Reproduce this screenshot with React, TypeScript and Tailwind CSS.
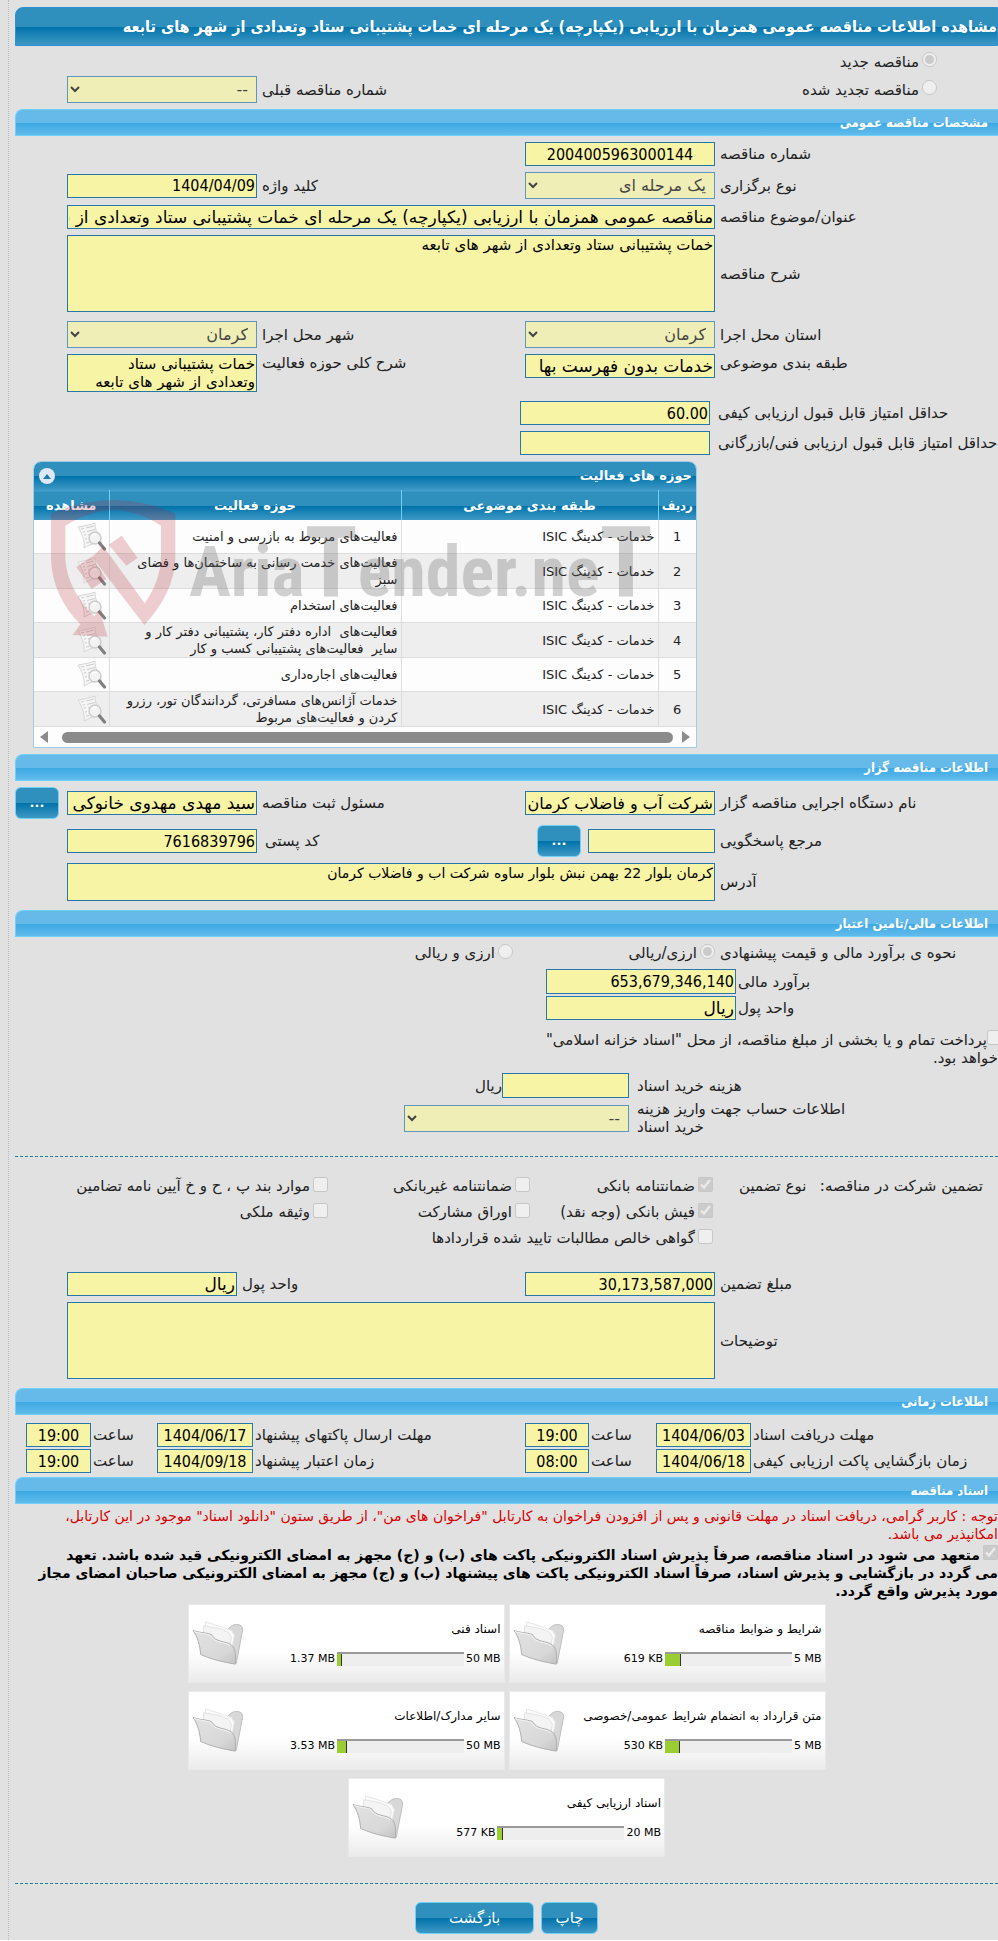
import type { ComponentProps, ReactNode } from "react";
import { twMerge } from "tailwind-merge";

const activities = [
  "فعالیت‌های مربوط به بازرسی و امنیت",
  "فعالیت‌های خدمت رسانی به ساختمان‌ها و فضای سبز",
  "فعالیت‌های استخدام",
  "فعالیت‌های  اداره دفتر کار، پشتیبانی دفتر کار و سایر  فعالیت‌های پشتیبانی کسب و کار",
  "فعالیت‌های اجاره‌داری",
  "خدمات آژانس‌های مسافرتی، گردانندگان تور، رزرو کردن و فعالیت‌های مربوط",
];

const documents = [
  { title: "شرایط و ضوابط مناقصه", used: "619 KB", limit: "5 MB", percent: 13 },
  { title: "اسناد فنی", used: "1.37 MB", limit: "50 MB", percent: 4 },
  { title: "متن قرارداد به انضمام شرایط عمومی/خصوصی", used: "530 KB", limit: "5 MB", percent: 12 },
  { title: "سایر مدارک/اطلاعات", used: "3.53 MB", limit: "50 MB", percent: 8 },
  { title: "اسناد ارزیابی کیفی", used: "577 KB", limit: "20 MB", percent: 4 },
];

const tender = "مناقصه عمومی همزمان با ارزیابی (یکپارچه) یک مرحله ای خمات پشتیبانی ستاد وتعدادی از شهر های تابعه";

// Shared class strings
const field = "block w-full border border-[#2678ab] bg-[#f7f4a6] text-black";
const area = "resize-none overflow-hidden px-px text-[15px] leading-[18px]";
const condensed = "font-['DejaVu_Sans_Condensed','DejaVu_Sans',sans-serif]";
const farsi = "font-['DejaVu_Sans',sans-serif] text-[17px]";
const darkBar = "bg-[linear-gradient(to_bottom,#2f90be_0%,#2f90be_50%,#0073ab_51%,#3f98c4_100%)]";
const twoCols = "grid grid-cols-[minmax(0,1fr)_190px_268px_190px_52px] items-center";
const timeCols = "grid grid-cols-[minmax(0,1fr)_95px_67px_64px_272px_96px_66px_65px_11px] items-center";

function Label({ className, ...props }: ComponentProps<"label">) {
  return <label className={twMerge("block pl-[5px] text-left", className)} {...props} />;
}

function TextField({ className, ...props }: ComponentProps<"input">) {
  return <input type="text" readOnly className={twMerge(field, condensed, "h-6 px-px text-[16px]", className)} {...props} />;
}

function SelectField({ id, value, className }: { id: string; value: string; className?: string }) {
  return (
    <select id={id} disabled className={twMerge(field, "h-[27px] px-1 text-[16px] opacity-70", className)}>
      <option>{value}</option>
    </select>
  );
}

function Choice({ type, name, checked, children }: { type: "radio" | "checkbox"; name?: string; checked?: boolean; children: ReactNode }) {
  return (
    <label className="flex items-center gap-[3px] whitespace-nowrap">
      <input type={type} name={name} defaultChecked={checked} disabled className="mb-1 size-[15px] shrink-0" />
      {children}
    </label>
  );
}

function Section({ title, className, children }: { title: string; className?: string; children: ReactNode }) {
  return (
    <section>
      <h2 className={twMerge("flex h-[27px] items-center rounded-tl-lg border-y border-l border-[#6fd0fa] bg-[linear-gradient(to_bottom,#66baea_0%,#66baea_50%,#3ba8e3_51%,#62bbec_100%)] pr-2.5 text-[13px] font-bold text-white", condensed)}>
        {title}
      </h2>
      <div className={twMerge("flex flex-col py-1.5", className)}>{children}</div>
    </section>
  );
}

function ActionButton({ className, ...props }: ComponentProps<"button">) {
  return (
    <button
      type="button"
      className={twMerge("h-8 rounded-md border border-[#6fd0fa] text-[15px] text-white", darkBar, className)}
      {...props}
    />
  );
}

function DocumentSearchIcon() {
  return (
    <svg width="30" height="29" viewBox="0 0 30 29" fill="none">
      <path d="M1 5c6-1 12-2 17-4 0 6 2 12 7 20-6-1-11 1-18 5C8 18 5 12 1 5Z" fill="#f6f6f6" stroke="#d6d6d6" />
      <path d="M4 7l3-.6M9 6l8-2M6 10l2-.4M10 9.500l8-2M7 13l2-.4M11 13l5-1.500M8 17l2-.4M9 21l3-.6" stroke="#cccccc" />
      <circle cx="18" cy="16" r="6" fill="#f2f2f2" fillOpacity=".85" stroke="#cdcdcd" strokeWidth="1.500" />
      <path d="M15 14c1-2 4-2 5-1" stroke="#fff" strokeWidth="1.500" />
      <path d="M22.500 21l5 6" stroke="#808080" strokeWidth="3.200" strokeLinecap="round" />
    </svg>
  );
}

function FolderIcon() {
  return (
    <svg width="52" height="48" viewBox="0 0 54 50" fill="none">
      <defs>
        <linearGradient id="folder-front" x1="0" y1="0" x2="1" y2="1">
          <stop offset="0" stopColor="#e2e2e2" />
          <stop offset=".7" stopColor="#d8d8d8" />
          <stop offset="1" stopColor="#c2c2c2" />
        </linearGradient>
      </defs>
      <path d="M12 12 37 10c4-5 9-7 14-4 2 2 2 5 1 8l-6 31-8-2Z" fill="#d8d8d8" stroke="#bcbcbc" />
      <path d="M14 2 30 7l11 4 3 5-5 27-26-15Z" fill="#fbfbfb" stroke="#e6e6e6" />
      <path d="M12 6 29 9l9 4 3 5-5 25-24-13Z" fill="#f4f4f4" stroke="#e2e2e2" />
      <path d="M1 11c5 2 13 2 19 4 5 9 14 6 21 11 4 4 5 9 4 20-12-2-25-5-36-10C8 26 6 18 1 11Z" fill="url(#folder-front)" stroke="#acacac" />
      <path d="M2 12c5 2 12 2 17 4 5 9 14 6 21 11" stroke="#f4f4f4" />
    </svg>
  );
}

function Watermark() {
  return (
    <div aria-hidden="true" dir="ltr" className="pointer-events-none absolute inset-0 overflow-hidden">
      <svg className="absolute top-[37px] left-[17px]" width="125" height="138" viewBox="60 118 375 414" fill="#b91c2c" fillOpacity=".21">
        <path d="M60 162Q250 80 433 162V300Q428 400 340 496L183 292 217 260 341 431Q388 365 390 290V198Q250 105 103 198V300Q110 390 190 470L205 450 230 531 124 526 148 494Q65 410 60 300Z" />
        <path d="M233 255 272 228 320 295 286 318ZM136 322 182 291 226 358 182 388Z" />
      </svg>
      <span className="absolute top-[51px] left-[155px] font-['Noto_Sans_ExtraCondensed','Roboto_Condensed','Open_Sans_Condensed','Roboto',sans-serif] text-[70px] leading-[100px] font-bold whitespace-nowrap text-[#6b6b6b]/30">
        Aria<span className="text-[98px]">T</span>ender.ne<span className="text-[98px]">T</span>
      </span>
    </div>
  );
}

function ActivityTable() {
  return (
    <div className="relative mr-[301px] ml-[18px] overflow-hidden rounded-t-lg border border-[#a3cbe6] bg-[#fdfdfd]">
      <div className={twMerge("flex h-7 items-center justify-between pr-1 pl-[5px]", darkBar)}>
        <h3 className="text-[13px] font-bold text-white">حوزه های فعالیت</h3>
        <button type="button" aria-label="بستن" className="flex size-4 items-center justify-center rounded-full bg-[#dfe8f8]">
          <svg width="8" height="5" viewBox="0 0 8 5">
            <path d="M0 5 4 0l4 5Z" fill="#1b7cae" />
          </svg>
        </button>
      </div>
      <table className="w-full table-fixed border-collapse text-[13px] leading-[17px] text-[#222]">
        <thead>
          <tr className={twMerge("h-[29px] border-t border-[#3f9fd0] text-white", darkBar)}>
            <th className={twMerge("w-[38px] border-l border-[#6fd0fa]", condensed)}>ردیف</th>
            <th className="w-[257px] border-l border-[#6fd0fa]">طبقه بندی موضوعی</th>
            <th className="border-l border-[#6fd0fa]">حوزه فعالیت</th>
            <th className="w-[75px]">مشاهده</th>
          </tr>
        </thead>
        <tbody>
          {activities.map((activity, i) => (
            <tr key={activity} className="h-[34px] border-b border-[#ddd] odd:bg-[#fdfdfd] even:bg-[#eeeeee]">
              <td className="border-l border-[#ddd] text-center">{i + 1}</td>
              <td className="border-l border-[#ddd] px-[3px]">خدمات - کدینگ ISIC</td>
              <td className="border-l border-[#ddd] pr-[3px] pl-2 whitespace-pre-wrap">{activity}</td>
              <td className="pr-0.5">
                <DocumentSearchIcon />
              </td>
            </tr>
          ))}
        </tbody>
      </table>
      <div className="flex h-5 items-center gap-2 px-1.5">
        <svg width="8" height="12" viewBox="0 0 8 12">
          <path d="M0 0 8 6 0 12Z" fill="#8b8b8b" />
        </svg>
        <div className="mr-px ml-1.5 h-[11px] flex-1 rounded-full bg-[#8b8b8b]" />
        <svg width="8" height="12" viewBox="0 0 8 12">
          <path d="M8 0 0 6l8 6Z" fill="#8b8b8b" />
        </svg>
      </div>
      <Watermark />
    </div>
  );
}

export default function App() {
  return (
    <div dir="rtl" lang="fa" className="bg-[#e1e1e1] pl-2 font-['DejaVu_Sans',sans-serif] text-[15px] leading-[18px] text-[#222]">
      <main className="overflow-hidden border-l border-dotted border-[#bbb] pt-[7px] pb-1.5 pl-1.5">
        <h1 className={twMerge("flex h-[39px] items-center rounded-tl-lg border border-[#2d8fd5] text-[16px] font-bold whitespace-nowrap text-white", condensed, darkBar)}>
          مشاهده اطلاعات {tender}
        </h1>

        <div className="flex flex-col gap-1.5 py-1.5">
          <div className="h-[18px] pr-[61px]">
            <Choice type="radio" name="tender-kind" checked>مناقصه جدید</Choice>
          </div>
          <div className={twoCols}>
            <div className="pr-[61px]">
              <Choice type="radio" name="tender-kind">مناقصه تجدید شده</Choice>
            </div>
            <Label htmlFor="previous" className="col-start-3">شماره مناقصه قبلی</Label>
            <SelectField id="previous" value="--" />
          </div>
        </div>

        <Section title="مشخصات مناقصه عمومی" className="gap-1.5">
          <div className={twoCols}>
            <Label htmlFor="number">شماره مناقصه</Label>
            <TextField id="number" defaultValue="2004005963000144" className="text-center" />
          </div>
          <div className={twoCols}>
            <Label htmlFor="method">نوع برگزاری</Label>
            <SelectField id="method" value="یک مرحله ای" />
            <Label htmlFor="keyword">کلید واژه</Label>
            <TextField id="keyword" defaultValue="1404/04/09" />
          </div>
          <div className={twoCols}>
            <Label htmlFor="subject">عنوان/موضوع مناقصه</Label>
            <TextField id="subject" defaultValue={tender} className={twMerge(farsi, "col-span-3")} />
          </div>
          <div className={twoCols}>
            <Label htmlFor="description">شرح مناقصه</Label>
            <textarea id="description" readOnly className={twMerge(field, area, "col-span-3 h-[77px]")} defaultValue="خمات پشتیبانی ستاد وتعدادی از شهر های تابعه" />
          </div>
          <div className={twMerge(twoCols, "mt-[3px]")}>
            <Label htmlFor="province">استان محل اجرا</Label>
            <SelectField id="province" value="کرمان" />
            <Label htmlFor="city">شهر محل اجرا</Label>
            <SelectField id="city" value="کرمان" />
          </div>
          <div className={twMerge(twoCols, "items-start")}>
            <Label htmlFor="category">طبقه بندی موضوعی</Label>
            <TextField id="category" defaultValue="خدمات بدون فهرست بها" className={farsi} />
            <Label htmlFor="scope">شرح کلی حوزه فعالیت</Label>
            <textarea id="scope" readOnly className={twMerge(field, area, "h-[38px] pl-5")} defaultValue="خمات پشتیبانی ستاد وتعدادی از شهر های تابعه" />
          </div>
          <div className="mt-[3px] flex items-center pl-[505px]">
            <Label htmlFor="quality-score" className="flex-1 pl-2 whitespace-nowrap">حداقل امتیاز قابل قبول ارزیابی کیفی</Label>
            <TextField id="quality-score" defaultValue="60.00" className="w-[190px]" />
          </div>
          <div className="flex items-center pl-[505px]">
            <Label htmlFor="technical-score" className="flex-1 pl-2 whitespace-nowrap">حداقل امتیاز قابل قبول ارزیابی فنی/بازرگانی</Label>
            <TextField id="technical-score" className="w-[190px]" />
          </div>
          <ActivityTable />
        </Section>

        <Section title="اطلاعات مناقصه گزار" className="gap-1.5">
          <div className={twoCols}>
            <Label htmlFor="agency">نام دستگاه اجرایی مناقصه گزار</Label>
            <TextField id="agency" defaultValue="شرکت آب و فاضلاب کرمان" className={twMerge(farsi, "text-[16px]")} />
            <Label htmlFor="registrar">مسئول ثبت مناقصه</Label>
            <TextField id="registrar" defaultValue="سید مهدی مهدوی خانوکی" className={farsi} />
            <ActionButton className="mr-2 text-[13px] font-bold">...</ActionButton>
          </div>
          <div className={twoCols}>
            <Label htmlFor="authority">مرجع پاسخگویی</Label>
            <div className="flex items-center gap-[7px]">
              <TextField id="authority" className="w-[127px]" />
              <ActionButton className="w-11 shrink-0 text-[13px] font-bold">...</ActionButton>
            </div>
            <Label htmlFor="postal-code" className="pl-2">کد پستی</Label>
            <TextField id="postal-code" defaultValue="7616839796" />
          </div>
          <div className={twMerge(twoCols, "mb-[3px]")}>
            <Label htmlFor="address">آدرس</Label>
            <textarea id="address" readOnly className={twMerge(field, area, "col-span-3 h-[38px] text-[14px]")} defaultValue="کرمان بلوار 22 بهمن نبش بلوار ساوه شرکت اب و فاضلاب کرمان" />
          </div>
        </Section>

        <Section title="اطلاعات مالی/تامین اعتبار">
          <div role="radiogroup" aria-labelledby="estimate-kind" className="grid h-5 grid-cols-[minmax(0,1fr)_202px_498px] items-center">
            <span id="estimate-kind" className="pl-[5px] text-left">نحوه ی برآورد مالی و قیمت پیشنهادی</span>
            <Choice type="radio" name="currency" checked>ارزی/ریالی</Choice>
            <Choice type="radio" name="currency">ارزی و ریالی</Choice>
          </div>
          <div className="mt-1.5 grid grid-cols-[minmax(0,1fr)_190px_531px] items-center gap-y-0.5">
            <Label htmlFor="estimate" className="pl-0.5">برآورد مالی</Label>
            <TextField id="estimate" defaultValue="653,679,346,140" className="h-[25px]" />
            <Label htmlFor="currency-unit" className="col-start-1 pl-0.5">واحد پول</Label>
            <TextField id="currency-unit" defaultValue="ریال" className={farsi} />
          </div>
          <label className="mt-2.5 w-[460px]">
            <input type="checkbox" disabled className="-mr-1 size-[15px]" />
            پرداخت تمام و یا بخشی از مبلغ مناقصه، از محل "اسناد خزانه اسلامی" خواهد بود.
          </label>
          <div className="mt-1.5 grid grid-cols-[minmax(0,1fr)_127px_487px] items-center">
            <Label htmlFor="document-cost" className="pl-2">هزینه خرید اسناد</Label>
            <TextField id="document-cost" className="h-[25px]" />
            <span>ریال</span>
          </div>
          <div className="mt-0.5 grid grid-cols-[minmax(0,1fr)_225px_389px] items-center">
            <Label htmlFor="account" className="w-[220px] justify-self-end pl-2">اطلاعات حساب جهت واریز هزینه خرید اسناد</Label>
            <SelectField id="account" value="--" />
          </div>
          <hr className="mt-5 border-dashed border-[#2678ab]" />

          <div className="mt-4 grid grid-cols-[minmax(0,1fr)_183px_202px_313px] items-center">
            <div className="flex h-[26px] items-center justify-between pr-[15px] pl-[26px] whitespace-nowrap">
              <span>تضمین شرکت در مناقصه:</span>
              <span>نوع تضمین</span>
            </div>
            <Choice type="checkbox" checked>ضمانتنامه بانکی</Choice>
            <Choice type="checkbox">ضمانتنامه غیربانکی</Choice>
            <Choice type="checkbox">موارد بند پ ، ح و خ آیین نامه تضامین</Choice>
            <div className="col-start-2 flex h-[26px] items-center">
              <Choice type="checkbox" checked>فیش بانکی (وجه نقد)</Choice>
            </div>
            <Choice type="checkbox">اوراق مشارکت</Choice>
            <Choice type="checkbox">وثیقه ملکی</Choice>
            <div className="col-span-2 col-start-2 flex h-[26px] items-center">
              <Choice type="checkbox">گواهی خالص مطالبات تایید شده قراردادها</Choice>
            </div>
          </div>

          <div className="mt-[21px] mb-[3px] flex flex-col gap-1.5">
            <div className={twoCols}>
              <Label htmlFor="guarantee">مبلغ تضمین</Label>
              <TextField id="guarantee" defaultValue="30,173,587,000" />
              <div className="col-span-2 flex items-center">
                <Label htmlFor="guarantee-unit" className="flex-1">واحد پول</Label>
                <TextField id="guarantee-unit" defaultValue="ریال" className={twMerge(farsi, "w-[170px]")} />
              </div>
            </div>
            <div className={twoCols}>
              <Label htmlFor="notes">توضیحات</Label>
              <textarea id="notes" readOnly className={twMerge(field, area, "col-span-3 h-[77px]")} />
            </div>
          </div>
        </Section>

        <Section title="اطلاعات زمانی" className="gap-0.5 pb-1">
          <div className={twMerge(timeCols, "mt-0.5")}>
            <Label htmlFor="receive-date" className="pl-0.5">مهلت دریافت اسناد</Label>
            <TextField id="receive-date" defaultValue="1404/06/03" className="text-center" />
            <Label htmlFor="receive-time" className="pl-0.5">ساعت</Label>
            <TextField id="receive-time" defaultValue="19:00" className="text-center" />
            <Label htmlFor="send-date" className="pl-0.5">مهلت ارسال پاکتهای پیشنهاد</Label>
            <TextField id="send-date" defaultValue="1404/06/17" className="text-center" />
            <Label htmlFor="send-time" className="pl-0.5">ساعت</Label>
            <TextField id="send-time" defaultValue="19:00" className="text-center" />
          </div>
          <div className={timeCols}>
            <Label htmlFor="opening-date" className="pl-0.5">زمان بازگشایی پاکت ارزیابی کیفی</Label>
            <TextField id="opening-date" defaultValue="1404/06/18" className="text-center" />
            <Label htmlFor="opening-time" className="pl-0.5">ساعت</Label>
            <TextField id="opening-time" defaultValue="08:00" className="text-center" />
            <Label htmlFor="validity-date" className="pl-0.5">زمان اعتبار پیشنهاد</Label>
            <TextField id="validity-date" defaultValue="1404/09/18" className="text-center" />
            <Label htmlFor="validity-time" className="pl-0.5">ساعت</Label>
            <TextField id="validity-time" defaultValue="19:00" className="text-center" />
          </div>
        </Section>

        <Section title="اسناد مناقصه" className="pt-[3px]">
          <p className="text-[14px] text-[#d90000]">
            توجه : کاربر گرامی، دریافت اسناد در مهلت قانونی و پس از افزودن فراخوان به کارتابل "فراخوان های من"، از طریق ستون "دانلود اسناد" موجود در این کارتابل، امکانپذیر می باشد.
          </p>
          <label className="mt-0.5 text-[14px] font-bold text-black">
            <input type="checkbox" defaultChecked disabled className="ml-[3px] size-[15px]" />
            متعهد می شود در اسناد مناقصه، صرفاً پذیرش اسناد الکترونیکی پاکت های (ب) و (ج) مجهز به امضای الکترونیکی قید شده باشد. تعهد می&nbsp;گردد در بازگشایی و پذیرش اسناد، صرفاً اسناد الکترونیکی پاکت های پیشنهاد (ب) و (ج) مجهز به امضای الکترونیکی صاحبان امضای مجاز مورد پذیرش واقع گردد.
          </label>
          <ul className="mx-auto mt-1 flex max-w-[640px] flex-wrap justify-center gap-x-1 gap-y-2">
            {documents.map((doc) => (
              <li key={doc.title} className="flex h-[79px] w-[317px] items-center justify-between border border-[#e9e9e9] bg-linear-to-b from-white from-60% to-[#ebebeb] px-[3px] text-[12px] text-black">
                <div className="flex flex-col gap-3 whitespace-nowrap">
                  <span>{doc.title}</span>
                  <div className="flex items-center gap-0.5 text-[11px]">
                    <span dir="ltr">{doc.limit}</span>
                    <div dir="ltr" className="h-3.5 w-[127px] border-t-2 border-[#999] bg-[#eee]">
                      <div className="h-full border-r border-[#333] bg-[#9acd32]" style={{ width: `${doc.percent}%` }} />
                    </div>
                    <span dir="ltr">{doc.used}</span>
                  </div>
                </div>
                <FolderIcon />
              </li>
            ))}
          </ul>
        </Section>

        <hr className="mt-5 border-dashed border-[#2678ab]" />
        <div className="mt-[18px] flex justify-center gap-[7px]">
          <ActionButton className="w-[57px]">چاپ</ActionButton>
          <ActionButton className="w-[119px]">بازگشت</ActionButton>
        </div>
      </main>
    </div>
  );
}
